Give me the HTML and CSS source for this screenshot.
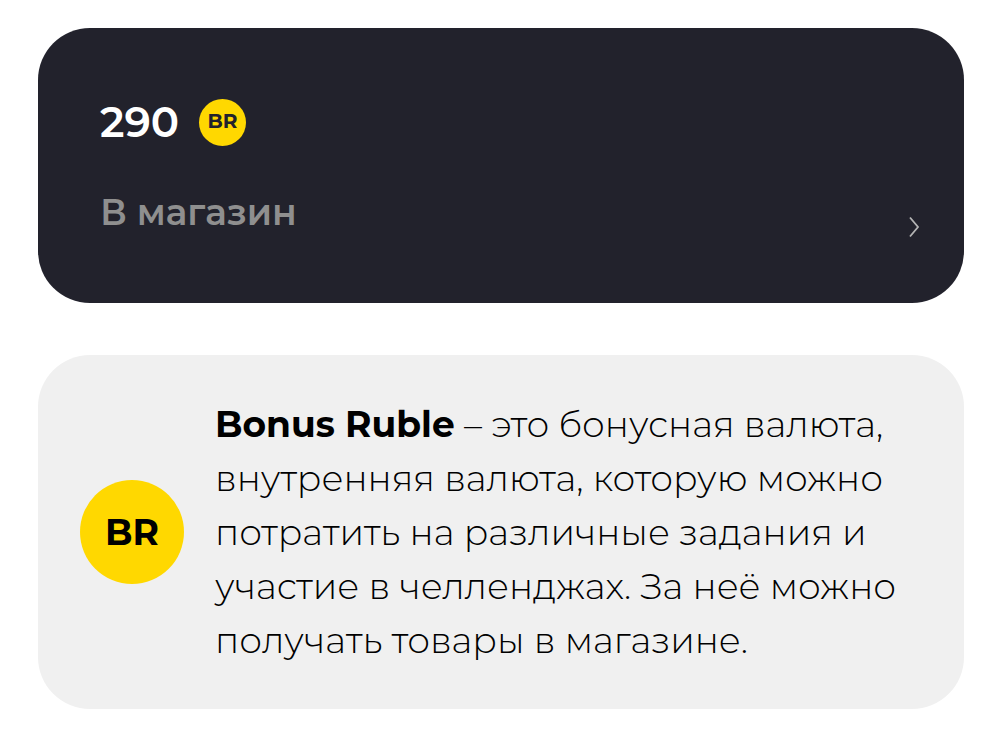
FILE: index.html
```html
<!DOCTYPE html>
<html lang="ru">
<head>
  <meta charset="UTF-8">
  <meta name="viewport" content="width=device-width, initial-scale=1.0">
  <title>Bonus Ruble</title>
  <link rel="stylesheet" href="styles.css">
</head>
<body>
  <main class="page">
    <section class="card balance">
      <div class="balance-row">
        <span class="balance-value">290</span>
        <span class="coin coin-small">BR</span>
      </div>
      <a class="shop-link" href="#">
        <span>В магазин</span>
        <svg class="chevron" viewBox="0 0 12 22" aria-hidden="true">
          <path d="M2 1.5 L10 11 L2 20.5" fill="none" stroke="currentColor" stroke-width="1.8"/>
        </svg>
      </a>
    </section>

    <section class="card info">
      <span class="coin">BR</span>
      <p class="info-text">
        <strong>Bonus Ruble</strong> – это бонусная валюта,<br>
        внутренняя валюта, которую можно<br>
        потратить на различные задания и<br>
        участие в челленджах. За неё можно<br>
        получать товары в магазине.
      </p>
    </section>
  </main>
</body>
</html>
```
FILE: styles.css
```css
body {
  margin: 0;
  background: #fff;
  color: #000;
  font-family: Montserrat, Inter, "Open Sans", sans-serif;
}

.page {
  display: flex;
  flex-direction: column;
  gap: 52px;
  padding: 28px 36px 28px 38px;
}

.card {
  border-radius: 52px;
}

/* Balance */
.balance {
  background: #22222c;
  padding: 68px 44px 55px 62px;
}
.balance-row {
  display: flex;
  align-items: center;
  gap: 20px;
  height: 52px;
}
.balance-value {
  color: #fff;
  font-size: 42px;
  font-weight: 600;
}
.shop-link {
  display: flex;
  justify-content: space-between;
  align-items: flex-end;
  margin-top: 44px;
  height: 56px;
  color: #8f8f8f;
  font-size: 36px;
  font-weight: 600;
  line-height: 40px;
  text-decoration: none;
}
.shop-link span {
  align-self: flex-start;
}
.chevron {
  width: 12px;
  height: 22px;
  margin-bottom: 10px;
  color: #b4b4b4;
}

/* Coin */
.coin {
  display: flex;
  flex: none;
  justify-content: center;
  align-items: center;
  width: 104px;
  height: 104px;
  border-radius: 50%;
  background: #ffd800;
  color: #000;
  font-size: 36px;
  font-weight: 700;
}
.coin-small {
  box-sizing: border-box;
  width: 47px;
  height: 47px;
  padding-bottom: 2px;
  color: #22222c;
  font-size: 20px;
}

/* Description */
.info {
  display: flex;
  align-items: center;
  gap: 31px;
  padding: 42px 32px 42px 42px;
  background: #f0f0f0;
}
.info-text {
  margin: 0;
  font-size: 36px;
  font-weight: 300;
  line-height: 54px;
}
.info-text strong {
  font-weight: 700;
}
```
